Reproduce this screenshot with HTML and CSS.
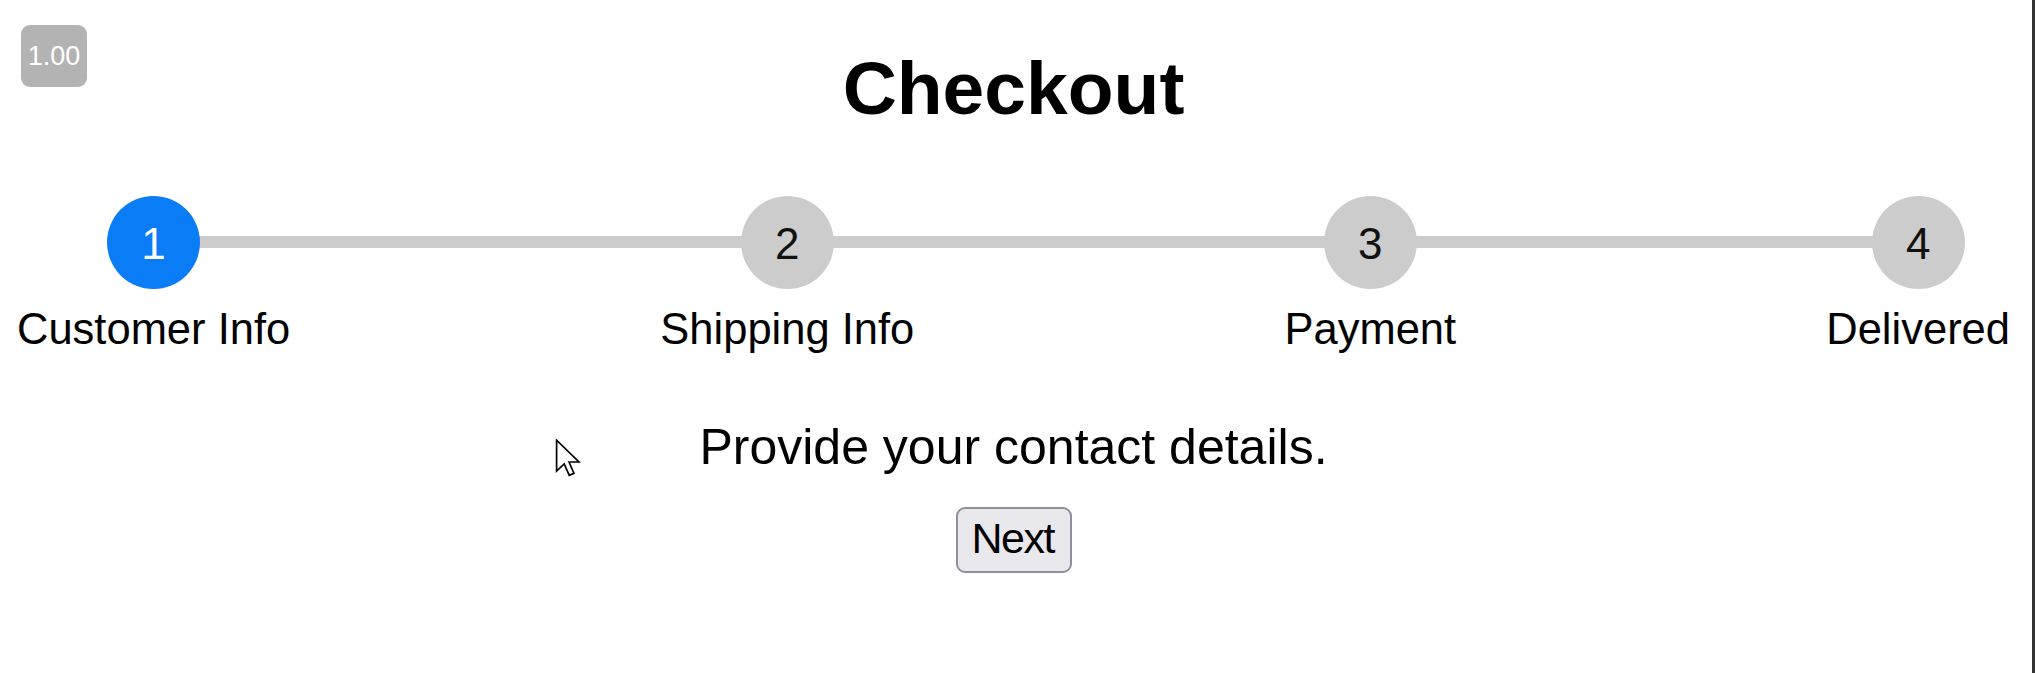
FILE: index.html
```html
<!DOCTYPE html>
<html lang="en">
<head>
<meta charset="utf-8">
<title>Checkout</title>
<link rel="stylesheet" href="styles.css">
</head>
<body>
<div class="zoom-badge">1.00</div>
<main class="page">
  <h1 class="title">Checkout</h1>
  <div class="stepper">
    <div class="step active">
      <div class="circle">1</div>
      <div class="label">Customer Info</div>
    </div>
    <div class="step">
      <div class="circle">2</div>
      <div class="label">Shipping Info</div>
    </div>
    <div class="step">
      <div class="circle">3</div>
      <div class="label">Payment</div>
    </div>
    <div class="step">
      <div class="circle">4</div>
      <div class="label">Delivered</div>
    </div>
  </div>
  <p class="message">Provide your contact details.</p>
  <div class="actions">
    <button class="next-btn" type="button">Next</button>
  </div>
</main>
<svg class="cursor" width="26" height="38" viewBox="0 0 12 18" aria-hidden="true">
  <path d="M0.6 0.6 L0.6 15.2 L4.2 11.8 L6.6 17.2 L8.8 16.2 L6.5 10.9 L11.2 10.9 Z" fill="#fff" stroke="#000" stroke-width="0.8" stroke-linejoin="miter"/>
</svg>
</body>
</html>
```

FILE: styles.css
```css
html, body {
  margin: 0;
  padding: 0;
}

body {
  position: relative;
  min-height: 100vh;
  box-sizing: border-box;
  border-right: 3px solid #333;
  background: #fff;
  color: #000;
  font-family: "Liberation Sans", Arial, sans-serif;
}

.zoom-badge {
  position: absolute;
  top: 25px;
  left: 21px;
  width: 66px;
  height: 62px;
  border-radius: 9px;
  background: #b3b3b3;
  color: #fff;
  font-size: 27px;
  display: flex;
  align-items: center;
  justify-content: center;
}

.page {
  padding: 45px 22px 0 17px;
}

.title {
  margin: 0;
  font-size: 75px;
  font-weight: bold;
  line-height: normal;
  text-align: center;
}

.stepper {
  position: relative;
  margin-top: 65px;
  display: flex;
  justify-content: space-between;
}

.stepper::before {
  content: "";
  position: absolute;
  top: 40px;
  left: 137px;
  right: 92px;
  height: 12px;
  background: #ccc;
}

.step {
  position: relative;
  display: flex;
  flex-direction: column;
  align-items: center;
}

.circle {
  width: 93px;
  height: 93px;
  border-radius: 50%;
  background: #ccc;
  color: #111;
  font-size: 44px;
  line-height: normal;
  display: flex;
  align-items: center;
  justify-content: center;
  box-sizing: border-box;
  padding-top: 2px;
}

.step.active .circle {
  background: #0a7cf6;
  color: #fff;
}

.label {
  margin-top: 16px;
  font-size: 43.5px;
  line-height: normal;
  white-space: nowrap;
}

.message {
  margin: 64px 0 0;
  font-size: 50px;
  line-height: normal;
  text-align: center;
}

.actions {
  margin-top: 31px;
  display: flex;
  justify-content: center;
}

.next-btn {
  font-family: "Liberation Sans", Arial, sans-serif;
  font-size: 43px;
  letter-spacing: -1.5px;
  line-height: normal;
  color: #000;
  background: #e9e9ed;
  border: 2px solid #8f8f9d;
  border-radius: 9px;
  padding: 5px 16px 8px 14px;
  width: 116px;
  height: 66px;
  box-sizing: border-box;
}

.cursor {
  position: absolute;
  left: 555px;
  top: 439px;
}
```
